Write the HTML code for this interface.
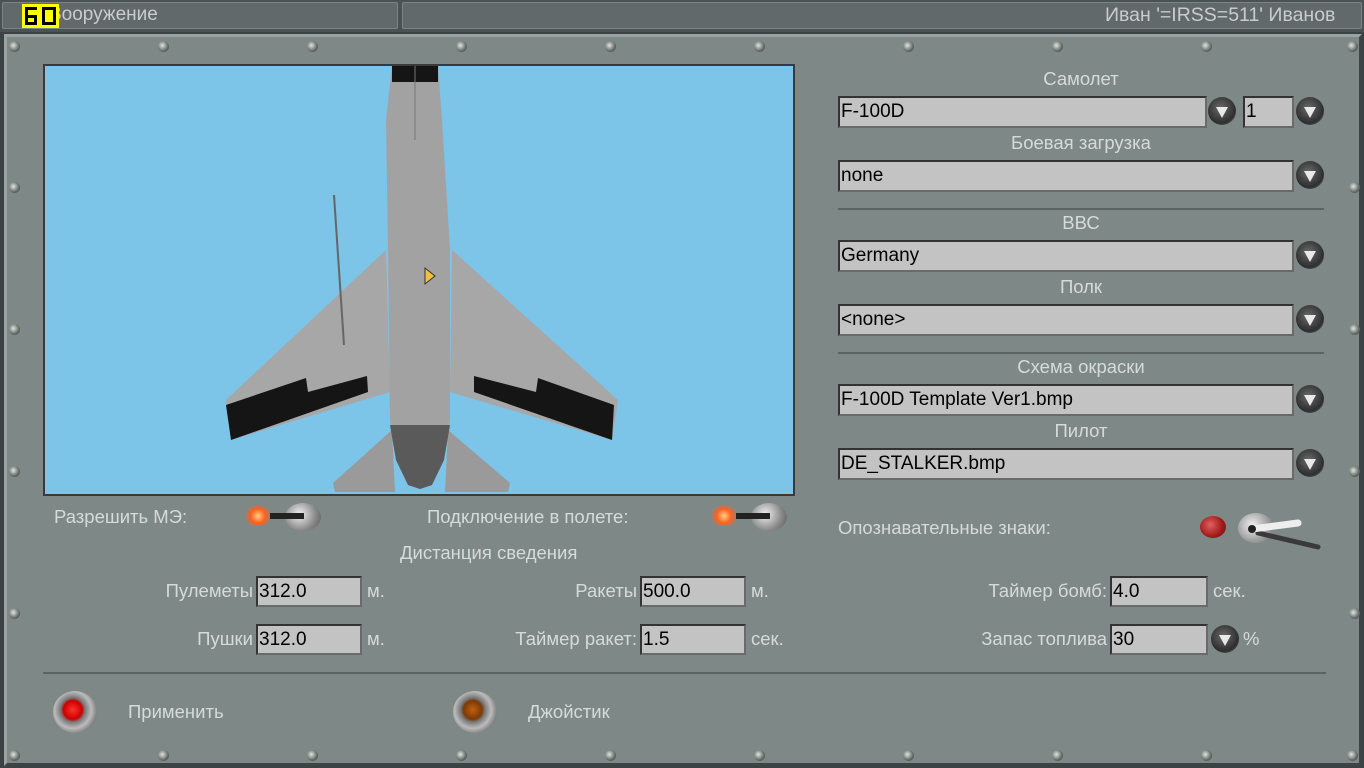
<!DOCTYPE html>
<html><head><meta charset="utf-8">
<style>
*{margin:0;padding:0;box-sizing:border-box}
body{width:1364px;height:768px;overflow:hidden;background:#3a4244;font-family:"Liberation Sans",sans-serif;position:relative}
.a{position:absolute}
.lbl{position:absolute;color:#d6dada;font-size:18.5px;white-space:nowrap}
.r{text-align:right}
.inp{position:absolute;background:#c3c3c3;border:2px solid #333;border-right-color:#6a6a6a;border-bottom-color:#6a6a6a;color:#000;font-size:19px;padding:0 0 0 1px;line-height:27px;white-space:nowrap}
.dd{position:absolute;width:28px;height:28px;border-radius:50%;background:radial-gradient(circle at 45% 40%,#6a6a6a,#2e2e2e 65%,#555 80%,#7a8482 100%)}
.dd:after{content:"";position:absolute;left:8px;top:10px;border-left:6px solid transparent;border-right:6px solid transparent;border-top:11px solid #e8e8e8}
.sc{position:absolute;width:11px;height:11px;border-radius:50%;background:radial-gradient(circle at 40% 40%,#e0e4e0,#6d746f 55%,#2e3432 100%)}
.hr{position:absolute;height:2px;background:#5b6463}
.k{position:absolute;background:#000}
</style></head><body>
<!-- top bar -->
<div class="a" style="left:0;top:0;width:1364px;height:32px;background:#4a5254"></div>
<div class="a" style="left:2px;top:2px;width:396px;height:27px;background:#62696b;border:1px solid #7d8486;border-radius:2px"></div>
<div class="a" style="left:402px;top:2px;width:960px;height:27px;background:#62696b;border:1px solid #7d8486;border-radius:2px"></div>
<div class="lbl" style="left:49px;top:4px;color:#c8cccc;font-size:19px">Вооружение</div>
<div class="a" style="left:22px;top:4px;width:37px;height:24px;background:#ff0"></div>
<!-- 6 -->
<div class="k" style="left:25px;top:7px;width:12px;height:3px"></div>
<div class="k" style="left:25px;top:7px;width:3px;height:18px"></div>
<div class="k" style="left:25px;top:15px;width:12px;height:3px"></div>
<div class="k" style="left:25px;top:22px;width:12px;height:3px"></div>
<div class="k" style="left:34px;top:15px;width:3px;height:10px"></div>
<!-- 0 -->
<div class="a" style="left:42px;top:7px;width:14px;height:18px;border:3px solid #000"></div>
<div class="lbl" style="left:1105px;top:4px;color:#c8cccc;font-size:19.5px">Иван '=IRSS=511' Иванов</div>
<!-- panel -->
<div class="a" style="left:4px;top:34px;width:1358px;height:732px;background:#7e8987;border-left:3px solid #9aa3a1;border-top:3px solid #9aa3a1;border-right:3px solid #3c4446;border-bottom:3px solid #3c4446"></div>
<!-- screws -->
<div class="sc" style="left:9px;top:41px"></div><div class="sc" style="left:158px;top:41px"></div><div class="sc" style="left:307px;top:41px"></div><div class="sc" style="left:456px;top:41px"></div><div class="sc" style="left:605px;top:41px"></div><div class="sc" style="left:754px;top:41px"></div><div class="sc" style="left:903px;top:41px"></div><div class="sc" style="left:1052px;top:41px"></div><div class="sc" style="left:1201px;top:41px"></div><div class="sc" style="left:1347px;top:41px"></div>
<div class="sc" style="left:9px;top:750px"></div><div class="sc" style="left:158px;top:750px"></div><div class="sc" style="left:307px;top:750px"></div><div class="sc" style="left:456px;top:750px"></div><div class="sc" style="left:605px;top:750px"></div><div class="sc" style="left:754px;top:750px"></div><div class="sc" style="left:903px;top:750px"></div><div class="sc" style="left:1052px;top:750px"></div><div class="sc" style="left:1201px;top:750px"></div><div class="sc" style="left:1347px;top:750px"></div>
<div class="sc" style="left:9px;top:182px"></div><div class="sc" style="left:9px;top:324px"></div><div class="sc" style="left:9px;top:466px"></div><div class="sc" style="left:9px;top:608px"></div>
<div class="sc" style="left:1349px;top:182px"></div><div class="sc" style="left:1349px;top:324px"></div><div class="sc" style="left:1349px;top:466px"></div><div class="sc" style="left:1349px;top:608px"></div>
<!-- preview -->
<div class="a" style="left:43px;top:64px;width:752px;height:432px;background:#7cc4e8;border:2px solid #3a3a3a;overflow:hidden">
<svg width="748" height="428" viewBox="45 66 748 428" style="position:absolute;left:0;top:0">
<polygon points="392,430 333,483 335,492 395,492" fill="#9a9a9a"/>
<polygon points="448,430 510,483 508,492 445,492" fill="#9a9a9a"/>
<polygon points="386,250 226,400 231,440 390,392" fill="#a7a7a7"/>
<polygon points="452,250 618,400 612,440 450,392" fill="#a7a7a7"/>
<polygon points="226,405 306,378 308,392 367,376 368,392 231,440" fill="#151515"/>
<polygon points="614,405 538,378 536,392 474,376 474,392 612,440" fill="#151515"/>
<path d="M392,66 L438,66 L442,120 L450,250 L450,420 L444,460 L432,485 L420,489 L408,485 L396,460 L390,420 L388,250 L386,120 Z" fill="#a2a2a2"/>
<path d="M390,425 L450,425 L444,460 L432,485 L420,489 L408,485 L396,460 Z" fill="#5a5a5a"/>
<rect x="392" y="66" width="46" height="16" fill="#151515"/>
<line x1="415" y1="66" x2="415" y2="140" stroke="#777" stroke-width="1"/>
<line x1="334" y1="195" x2="344" y2="345" stroke="#666" stroke-width="2"/>
<polygon points="425,268 425,284 435,276" fill="#f0c040" stroke="#333" stroke-width="1"/>
</svg></div>
<!-- bottom-left controls -->
<div class="lbl" style="left:54px;top:506px">Разрешить МЭ:</div>
<div class="a" style="left:243px;top:506px;width:30px;height:20px;border-radius:50%;background:radial-gradient(circle,#ffd080,#ff6020 40%,rgba(200,80,40,0) 75%)"></div>
<div class="a" style="left:285px;top:503px;width:36px;height:28px;border-radius:50%;background:radial-gradient(circle at 40% 40%,#f0f0f0,#888 60%,#555)"></div>
<div class="a" style="left:270px;top:513px;width:34px;height:6px;background:#222"></div>
<div class="lbl" style="left:427px;top:506px">Подключение в полете:</div>
<div class="a" style="left:709px;top:506px;width:30px;height:20px;border-radius:50%;background:radial-gradient(circle,#ffd080,#ff6020 40%,rgba(200,80,40,0) 75%)"></div>
<div class="a" style="left:751px;top:503px;width:36px;height:28px;border-radius:50%;background:radial-gradient(circle at 40% 40%,#f0f0f0,#888 60%,#555)"></div>
<div class="a" style="left:736px;top:513px;width:34px;height:6px;background:#222"></div>
<div class="lbl" style="left:400px;top:542px">Дистанция сведения</div>
<div class="lbl r" style="left:100px;width:153px;top:580px">Пулеметы</div>
<div class="inp" style="left:256px;top:576px;width:106px;height:31px">312.0</div>
<div class="lbl" style="left:367px;top:580px">м.</div>
<div class="lbl r" style="left:100px;width:153px;top:628px">Пушки</div>
<div class="inp" style="left:256px;top:624px;width:106px;height:31px">312.0</div>
<div class="lbl" style="left:367px;top:628px">м.</div>
<div class="lbl r" style="left:437px;width:200px;top:580px">Ракеты</div>
<div class="inp" style="left:640px;top:576px;width:106px;height:31px">500.0</div>
<div class="lbl" style="left:751px;top:580px">м.</div>
<div class="lbl r" style="left:437px;width:200px;top:628px">Таймер ракет:</div>
<div class="inp" style="left:640px;top:624px;width:106px;height:31px">1.5</div>
<div class="lbl" style="left:751px;top:628px">сек.</div>
<div class="lbl r" style="left:907px;width:200px;top:580px">Таймер бомб:</div>
<div class="inp" style="left:1110px;top:576px;width:98px;height:31px">4.0</div>
<div class="lbl" style="left:1213px;top:580px">сек.</div>
<div class="lbl r" style="left:907px;width:200px;top:628px">Запас топлива</div>
<div class="inp" style="left:1110px;top:624px;width:98px;height:31px">30</div>
<div class="dd" style="left:1211px;top:625px"></div>
<div class="lbl" style="left:1243px;top:628px">%</div>
<div class="hr" style="left:43px;top:672px;width:1283px"></div>
<div class="a" style="left:53px;top:691px;width:44px;height:42px;border-radius:50%;background:radial-gradient(circle at 45% 45%,#ff3030 0,#c00 28%,#777 36%,#bbb 55%,#666 80%,rgba(60,60,60,0) 100%)"></div>
<div class="lbl" style="left:128px;top:701px">Применить</div>
<div class="a" style="left:453px;top:691px;width:44px;height:42px;border-radius:50%;background:radial-gradient(circle at 45% 45%,#c06010 0,#7a3a08 28%,#777 36%,#bbb 55%,#666 80%,rgba(60,60,60,0) 100%)"></div>
<div class="lbl" style="left:528px;top:701px">Джойстик</div>
<!-- right column -->
<div class="lbl" style="left:838px;top:68px;width:486px;text-align:center">Самолет</div>
<div class="inp" style="left:838px;top:96px;width:369px;height:32px">F-100D</div>
<div class="dd" style="left:1208px;top:97px"></div>
<div class="inp" style="left:1243px;top:96px;width:51px;height:32px">1</div>
<div class="dd" style="left:1296px;top:97px"></div>
<div class="lbl" style="left:838px;top:132px;width:486px;text-align:center">Боевая загрузка</div>
<div class="inp" style="left:838px;top:160px;width:456px;height:32px">none</div>
<div class="dd" style="left:1296px;top:161px"></div>
<div class="hr" style="left:838px;top:208px;width:486px"></div>
<div class="lbl" style="left:838px;top:212px;width:486px;text-align:center">ВВС</div>
<div class="inp" style="left:838px;top:240px;width:456px;height:32px">Germany</div>
<div class="dd" style="left:1296px;top:241px"></div>
<div class="lbl" style="left:838px;top:276px;width:486px;text-align:center">Полк</div>
<div class="inp" style="left:838px;top:304px;width:456px;height:32px">&lt;none&gt;</div>
<div class="dd" style="left:1296px;top:305px"></div>
<div class="hr" style="left:838px;top:352px;width:486px"></div>
<div class="lbl" style="left:838px;top:356px;width:486px;text-align:center">Схема окраски</div>
<div class="inp" style="left:838px;top:384px;width:456px;height:32px">F-100D Template Ver1.bmp</div>
<div class="dd" style="left:1296px;top:385px"></div>
<div class="lbl" style="left:838px;top:420px;width:486px;text-align:center">Пилот</div>
<div class="inp" style="left:838px;top:448px;width:456px;height:32px">DE_STALKER.bmp</div>
<div class="dd" style="left:1296px;top:449px"></div>
<div class="lbl" style="left:838px;top:517px">Опознавательные знаки:</div>
<div class="a" style="left:1200px;top:516px;width:26px;height:22px;border-radius:50%;background:radial-gradient(circle at 40% 40%,#e06060,#a01818 60%,#502020)"></div>
<div class="a" style="left:1238px;top:513px;width:36px;height:30px;border-radius:50%;background:radial-gradient(circle at 40% 40%,#f0f0f0,#999 60%,#666)"></div>
<svg class="a" style="left:1240px;top:515px" width="90" height="40"><line x1="18" y1="18" x2="78" y2="32" stroke="#3a3a3a" stroke-width="5" stroke-linecap="round"/><line x1="12" y1="14" x2="58" y2="8" stroke="#eee" stroke-width="7" stroke-linecap="round"/><circle cx="12" cy="14" r="4" fill="#222"/></svg>
</body></html>
